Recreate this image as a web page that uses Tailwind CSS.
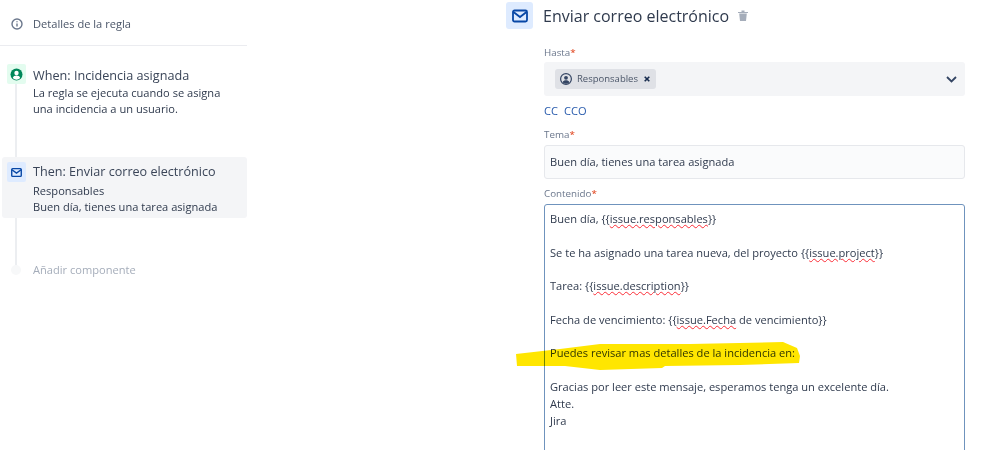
<!DOCTYPE html>
<html lang="es">
<head>
<meta charset="utf-8">
<script src="https://cdn.jsdelivr.net/npm/@tailwindcss/browser@4"></script>
</head>
<body class="bg-white">
<div class="relative flex h-[450px] w-[999px] overflow-hidden bg-white font-['Open_Sans','Noto_Sans',sans-serif] text-[#2f3a4d]">
  <!-- Sidebar -->
  <aside class="w-[247px] shrink-0">
    <div class="flex h-[46px] items-center gap-[10px] border-b border-[#ebecf0] pl-[11px] pt-[3px] text-[11.1px] text-[#4a5568]">
      <svg class="h-[12px] w-[12px] text-[#6b778c]" viewBox="0 0 12 12" fill="none" stroke="currentColor"><circle cx="6" cy="6" r="5" stroke-width="1.4"/><path d="M6 5.5v3M6 3.2v1" stroke-width="1.4"/></svg>
      <span>Detalles de la regla</span>
    </div>
    <div class="relative">
      <div class="absolute left-[15px] top-[30px] h-[190px] w-[2px] bg-[#eceef1]"></div>
      <div class="relative flex pl-[7px] pt-[18px]">
        <div class="flex h-[20px] w-[19px] items-center justify-center rounded-[2px] bg-[#e3fcef]">
          <svg class="h-[13px] w-[13px]" viewBox="0 0 13 13"><circle cx="6.5" cy="6.5" r="6" fill="#00875a"/><circle cx="6.5" cy="5" r="2.2" fill="#fff"/><path d="M2.8 10c.6-1.8 2-2.5 3.7-2.5s3.1.7 3.7 2.5a5 5 0 0 1-7.4 0z" fill="#fff"/></svg>
        </div>
        <div class="ml-[7px] w-[200px]">
          <div class="pt-[1px] text-[12.65px] leading-[20px] text-[#3a4558]">When: Incidencia asignada</div>
          <p class="text-[11.1px] leading-[15.5px]">La regla se ejecuta cuando se asigna<br>una incidencia a un usuario.</p>
        </div>
      </div>
      <div class="relative ml-[2px] mt-[41px] flex h-[61px] w-[245px] rounded-[3px] bg-[#f4f5f7] pl-[5px] pt-[5px]">
        <div class="flex h-[20px] w-[19px] items-center justify-center rounded-[2px] bg-[#deebff]">
          <svg class="h-[11px] w-[11px] text-[#0747a6]" viewBox="0 0 12 10" fill="none" stroke="currentColor" stroke-width="1.5"><rect x=".8" y=".8" width="10.4" height="8.4" rx="1"/><path d="M1 2l5 3.7L11 2"/></svg>
        </div>
        <div class="ml-[7px]">
          <div class="text-[12.6px] leading-[20px] text-[#3a4558]">Then: Enviar correo electrónico</div>
          <p class="mt-[1px] text-[11.1px] leading-[15.5px]">Responsables<br>Buen día, tienes una tarea asignada</p>
        </div>
      </div>
      <div class="relative mt-[44px] flex items-center pl-[11px]">
        <div class="h-[10px] w-[10px] rounded-full bg-[#f7f8f9]"></div>
        <span class="ml-[12px] text-[11.1px] text-[#a5adba]">Añadir componente</span>
      </div>
    </div>
  </aside>
  <!-- Main -->
  <main class="ml-[259px] w-[459px] pt-[2px]">
    <div class="flex h-[27px] items-center">
      <div class="flex h-[27px] w-[27px] items-center justify-center rounded-[3px] bg-[#deebff]">
        <svg class="h-[14px] w-[16px] text-[#0747a6]" viewBox="0 0 16 13" fill="none" stroke="currentColor" stroke-width="1.8"><rect x="1" y="1" width="14" height="11" rx="1.5"/><path d="M1.5 2.5L8 7.5l6.5-5"/></svg>
      </div>
      <h1 class="ml-[10px] text-[16px] font-medium text-[#2f3a4d]">Enviar correo electrónico</h1>
      <svg class="ml-[9px] h-[11px] w-[10px] text-[#a5adba]" viewBox="0 0 10 11" fill="currentColor"><path d="M0 2h10v1H0zM3.5.5h3V2h-3zM1.2 3.5h7.6L8 11H2z"/></svg>
    </div>
    <div class="ml-[38px]">
      <label class="mt-[17px] block text-[9.8px] leading-[14px] font-medium text-[#6b778c]">Hasta<span class="text-[#de350b]">*</span></label>
      <div class="mt-[2px] flex h-[34px] items-center justify-between rounded-[3px] bg-[#f4f5f7] pl-[11px] pr-[8px]">
        <div class="flex h-[20px] w-[101px] items-center rounded-[3px] bg-[#dfe1e6] pl-[5px] text-[9.5px] text-[#4a5568]">
          <svg class="h-[12px] w-[12px]" viewBox="0 0 12 12"><circle cx="6" cy="6" r="5.4" fill="none" stroke="#344563" stroke-width="1.2"/><circle cx="6" cy="4.8" r="1.9" fill="#344563"/><path d="M2.6 9.3c.6-1.5 2-2 3.4-2s2.8.5 3.4 2a4.5 4.5 0 0 1-6.8 0z" fill="#344563"/></svg>
          <span class="ml-[5px]">Responsables</span>
          <svg class="ml-[6px] h-[6px] w-[6px] text-[#172b4d]" viewBox="0 0 6 6" stroke="currentColor" stroke-width="1.6"><path d="M.7.7l4.6 4.6M5.3.7L.7 5.3"/></svg>
        </div>
        <svg class="h-[7px] w-[11px] text-[#344563]" viewBox="0 0 11 7" fill="none" stroke="currentColor" stroke-width="1.8"><path d="M1 1l4.5 4.5L10 1"/></svg>
      </div>
      <div class="mt-[7px] flex gap-[6px] text-[11.1px] leading-[16px] text-[#2a5cad]"><span>CC</span><span>CCO</span></div>
      <label class="mt-[9px] block text-[9.8px] leading-[14px] font-medium text-[#6b778c]">Tema<span class="text-[#de350b]">*</span></label>
      <div class="mt-[3px] flex h-[34px] items-center rounded-[3px] border border-[#e6e8ec] bg-[#fafbfc] pl-[5px] text-[11.1px] text-[#2f3a4d]">Buen día, tienes una tarea asignada</div>
      <label class="mt-[8px] block text-[9.8px] leading-[14px] font-medium text-[#6b778c]">Contenido<span class="text-[#de350b]">*</span></label>
      <div class="mt-[3px] h-[260px] rounded-[3px] border border-[#6f93bd] pl-[5px] pt-[6px] text-[11.1px] leading-[16.8px] text-[#2f3a4d]">
        <p>Buen día, {{<span class="underline decoration-wavy decoration-red-500 decoration-1">issue.responsables</span>}}</p>
        <p class="mt-[16.8px]">Se te ha asignado una tarea nueva, del proyecto {{<span class="underline decoration-wavy decoration-red-500 decoration-1">issue.project</span>}}</p>
        <p class="mt-[16.8px]">Tarea: {{<span class="underline decoration-wavy decoration-red-500 decoration-1">issue.description</span>}}</p>
        <p class="mt-[16.8px]">Fecha de vencimiento: {{<span class="underline decoration-wavy decoration-red-500 decoration-1">issue.Fecha</span> de vencimiento}}</p>
        <p class="mt-[16.8px]">Puedes revisar mas detalles de la incidencia en:</p>
        <p class="mt-[16.8px]">Gracias por leer este mensaje, esperamos tenga un excelente día.</p>
        <p>Atte.</p>
        <p>Jira</p>
      </div>
    </div>
  </main>
  <!-- Marker highlight -->
  <svg class="pointer-events-none absolute left-0 top-0 h-[450px] w-[999px] mix-blend-multiply" viewBox="0 0 999 450"><path d="M516 354L560 349L600 344L690 344L783 342L797 348L800 356L799 363L740 365L665 366L662 368L600 370L565 366L517 366Z" fill="#ffe600"/></svg>
</div>
</body>
</html>
